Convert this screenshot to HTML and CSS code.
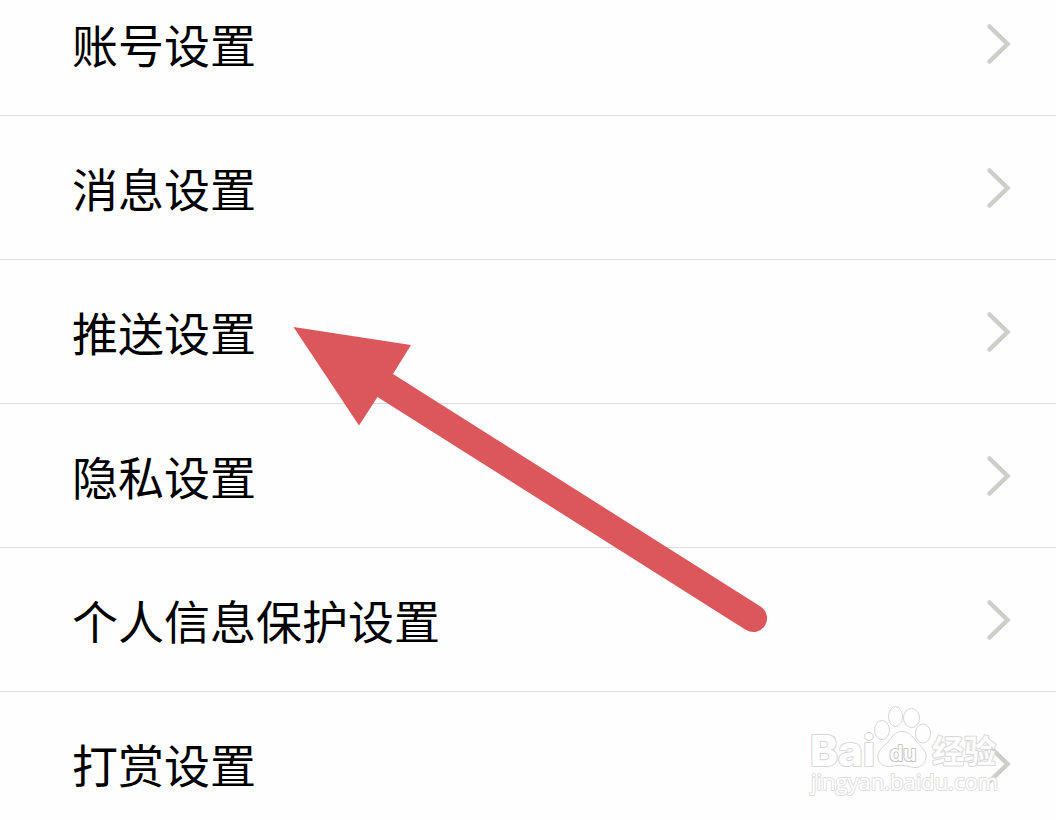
FILE: index.html
```html
<!DOCTYPE html>
<html lang="zh-CN">
<head>
    <meta charset="UTF-8">
    <meta name="viewport" content="width=device-width, initial-scale=1.0">
    <title>设置</title>
    <link rel="stylesheet" href="styles.css">
</head>
<body>
    <main class="screen">
        <ul class="settings-list">
            <li class="settings-item">
                <span>账号设置</span>
                <svg class="chevron" viewBox="0 0 26 44"><path d="M3.5 4.5 L21.5 22 L3.5 39.5"/></svg>
            </li>
            <li class="settings-item">
                <span>消息设置</span>
                <svg class="chevron" viewBox="0 0 26 44"><path d="M3.5 4.5 L21.5 22 L3.5 39.5"/></svg>
            </li>
            <li class="settings-item">
                <span>推送设置</span>
                <svg class="chevron" viewBox="0 0 26 44"><path d="M3.5 4.5 L21.5 22 L3.5 39.5"/></svg>
            </li>
            <li class="settings-item">
                <span>隐私设置</span>
                <svg class="chevron" viewBox="0 0 26 44"><path d="M3.5 4.5 L21.5 22 L3.5 39.5"/></svg>
            </li>
            <li class="settings-item">
                <span>个人信息保护设置</span>
                <svg class="chevron" viewBox="0 0 26 44"><path d="M3.5 4.5 L21.5 22 L3.5 39.5"/></svg>
            </li>
            <li class="settings-item">
                <span>打赏设置</span>
                <svg class="chevron" viewBox="0 0 26 44"><path d="M3.5 4.5 L21.5 22 L3.5 39.5"/></svg>
            </li>
        </ul>

        <!-- arrow pointing at the push settings row -->
        <svg class="arrow" viewBox="0 0 476 308">
            <path d="M0.5 1 L118 19 L100 48 L467.5 280.5 A13.5 13.5 0 0 1 453 304 L84.5 71 L66 99.5 Z"/>
        </svg>

        <svg class="watermark" viewBox="0 0 230 110">
            <text class="brand" x="14" y="69.5" textLength="65" lengthAdjust="spacingAndGlyphs">Bai</text>
            <g class="paw">
                <ellipse cx="86" cy="34" rx="7.5" ry="9.5"/>
                <ellipse cx="99.5" cy="20.5" rx="7" ry="10"/>
                <ellipse cx="115.5" cy="22" rx="8" ry="9.5"/>
                <ellipse cx="127" cy="37.5" rx="7.5" ry="9.5"/>
                <path d="M106 35.5 C99 35.5 96 41 92 46 C87 51 81 55 82 62 C83 69 90 72 98 70 C103 69 109 69 115 71 C123 73 129 69 130 62 C131 54 124 50 120 45 C116 40 113 35.5 106 35.5 Z"/>
            </g>
            <text class="du" x="93.5" y="65" textLength="27" lengthAdjust="spacingAndGlyphs">du</text>
            <text class="brand-cn" x="136" y="67" textLength="64" lengthAdjust="spacingAndGlyphs">经验</text>
            <text class="site" x="15" y="94" textLength="187" lengthAdjust="spacingAndGlyphs">jingyan.baidu.com</text>
        </svg>
    </main>
</body>
</html>
```

FILE: styles.css
```css
body {
    margin: 0;
    background: #fefefe;
    color: #000;
    font-family: "Noto Sans CJK SC", sans-serif;
}

.screen {
    position: relative;
    height: 820px;
    overflow: hidden;
}

/* the list is scrolled a little, so the first row is cut off */
.settings-list {
    list-style: none;
    margin: -28px 0 0;
    padding: 0;
}

.settings-item {
    display: flex;
    justify-content: space-between;
    align-items: center;
    box-sizing: border-box;
    height: 144px;
    padding: 0 44px 0 72px;
    border-bottom: 1px solid #dcdcdc;
    font-size: 46px;
    line-height: 60px;
}

.settings-item span {
    margin-bottom: 2px;
}

.chevron {
    width: 26px;
    height: 44px;
    fill: none;
    stroke: #cececb;
    stroke-width: 4.5;
    stroke-linecap: round;
}

.arrow {
    position: absolute;
    left: 293px;
    top: 326px;
    width: 476px;
    height: 308px;
    fill: #dc575c;
}

.watermark {
    position: absolute;
    left: 796px;
    top: 696px;
    width: 230px;
    height: 110px;
    fill: #fff;
    stroke: #d6d6d6;
    stroke-width: 1;
    stroke-linejoin: round;
}

.watermark text {
    paint-order: stroke;
}

.brand {
    font: 800 42px Inter, sans-serif;
    stroke-width: 2;
}

.paw {
    fill: none;
}

.du {
    font: 600 21px Inter, sans-serif;
    stroke: #c6c6c6;
    stroke-width: 2;
}

.brand-cn {
    font: bold 32px "Noto Sans CJK SC", sans-serif;
    fill-opacity: 0.9;
    stroke: #dadada;
    stroke-width: 2;
}

.site {
    font: 21.5px "Open Sans", sans-serif;
    stroke: #e0e0e0;
    stroke-width: 2;
}
```
